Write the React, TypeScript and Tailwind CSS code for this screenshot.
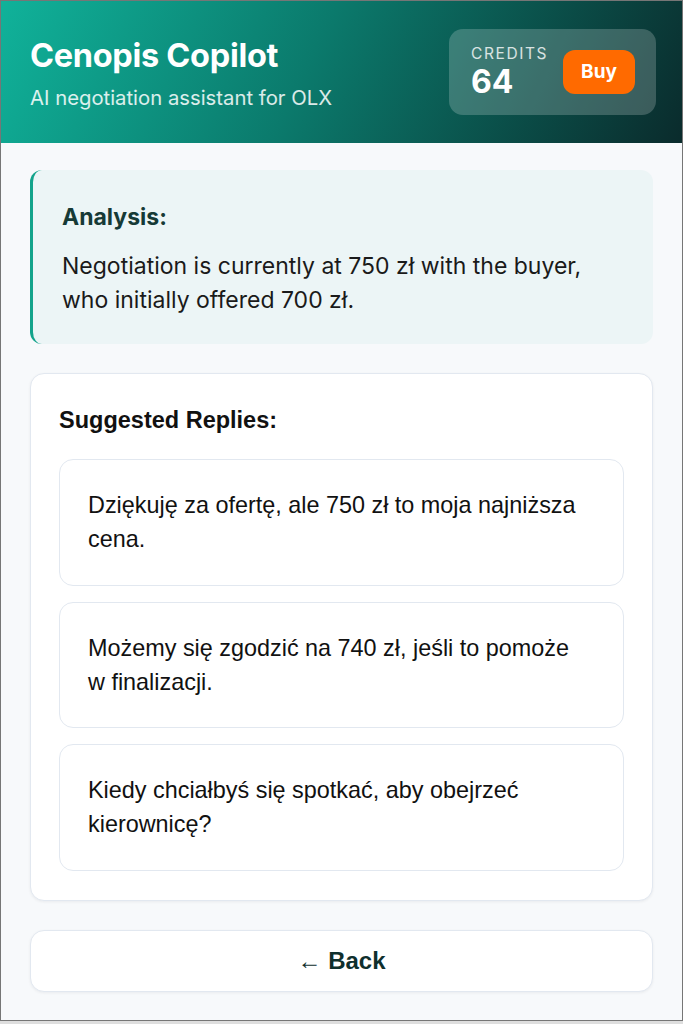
import React from "react";

const inter = { fontFamily: "Inter, 'Noto Sans', sans-serif" };
const arial = { fontFamily: "'Liberation Sans', Arial, sans-serif" };

export default function App() {
  const replies = [
    "Dziękuję za ofertę, ale 750 zł to moja najniższa cena.",
    "Możemy się zgodzić na 740 zł, jeśli to pomoże w finalizacji.",
    "Kiedy chciałbyś się spotkać, aby obejrzeć kierownicę?",
  ];
  return (
    <div className="min-h-[1024px] w-[683px] bg-[#dedede]">
      <div className="flex h-[1021px] w-[683px] flex-col overflow-hidden border border-[#767676] bg-[#f7f9fb]">
        <header className="flex h-[142px] shrink-0 items-center justify-between bg-[linear-gradient(115deg,#10b29a_0%,#0b7a6c_45%,#0a2b2c_100%)] pl-[29px] pr-[26px] pt-[1px]" style={inter}>
          <div className="mt-[4px] flex flex-col">
            <h1 className="text-[32.5px] font-bold leading-[38px] tracking-[-0.3px] text-white">Cenopis Copilot</h1>
            <p className="mt-[9px] text-[20.3px] leading-[28px] text-white/85">AI negotiation assistant for OLX</p>
          </div>
          <div className="mb-[1px] flex h-[86px] w-[207px] items-center justify-between rounded-[14px] bg-white/20 pl-[22px] pr-[21px]">
            <div className="flex flex-col">
              <span className="text-[15.5px] leading-[20px] tracking-[1.6px] text-white/80">CREDITS</span>
              <span className="text-[32px] font-bold leading-[36px] text-white">64</span>
            </div>
            <button className="h-[44px] w-[72px] rounded-[12px] bg-[#ff6a00] text-[19px] font-bold text-white">Buy</button>
          </div>
        </header>
        <main className="flex flex-col px-[29px] pt-[27px]">
          <section className="rounded-[12px] border-l-[3px] border-[#13a38b] bg-[#ecf5f6] pb-[27px] pl-[29px] pr-[29px] pt-[32px]" style={inter}>
            <h2 className="text-[23px] font-bold leading-[30px] text-[#163a36]">Analysis:</h2>
            <p className="mt-[17px] text-[23px] leading-[34px] text-[#1a1a1a]">
              Negotiation is currently at 750 zł with the buyer, who initially offered 700 zł.
            </p>
          </section>
          <section
            className="mt-[29px] rounded-[14px] border border-[#e2e8f0] bg-white px-[28px] pb-[29px] pt-[32px] shadow-[0_1px_3px_rgba(15,23,42,0.06)]"
            style={arial}
          >
            <h2 className="text-[23.5px] font-bold leading-[28px] text-[#111]">Suggested Replies:</h2>
            <div className="mt-[25px] flex flex-col gap-[16px]">
              {replies.map((r) => (
                <div key={r} className="rounded-[14px] border border-[#e2e8f0] bg-white pb-[28.5px] pl-[28px] pr-[38px] pt-[28px] text-[23.4px] leading-[34px] text-[#111]">
                  {r}
                </div>
              ))}
            </div>
          </section>
          <button
            className="mt-[29px] flex h-[62px] items-center justify-center rounded-[14px] border border-[#e2e8f0] bg-white text-[24px] font-bold text-[#0f2f2d] shadow-[0_1px_3px_rgba(15,23,42,0.06)]"
            style={arial}
          >
            ← Back
          </button>
        </main>
      </div>
    </div>
  );
}
